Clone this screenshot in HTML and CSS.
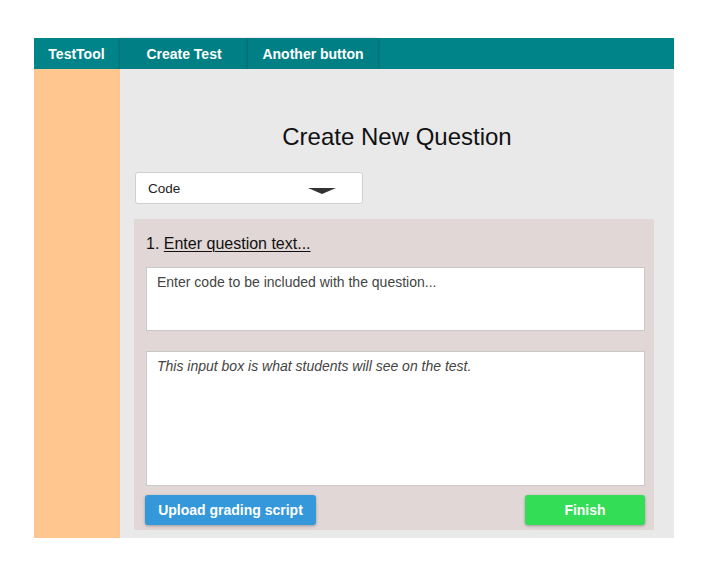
FILE: index.html
```html
<!DOCTYPE html>
<html>
<head>
<meta charset="utf-8">
<link rel="stylesheet" href="styles.css">
</head>
<body>
<div class="app">
  <nav class="nav">
    <div class="brand">TestTool</div>
    <button class="navbtn nb1">Create Test</button>
    <button class="navbtn nb2">Another button</button>
  </nav>
  <div class="body">
    <aside class="side"></aside>
    <main class="main">
      <h1 class="title">Create New Question</h1>
      <div class="select">
        <span>Code</span>
        <span class="caret"></span>
      </div>
      <section class="panel">
        <div class="qline">1. <u>Enter question text...</u></div>
        <div class="ta ta1">Enter code to be included with the question...</div>
        <div class="ta ta2"><i>This input box is what students will see on the test.</i></div>
        <div class="actions">
          <button class="btn upload">Upload grading script</button>
          <button class="btn finish">Finish</button>
        </div>
      </section>
    </main>
  </div>
</div>
</body>
</html>
```
FILE: styles.css
```css
html, body { margin: 0; padding: 0; background: #fff; }
body { font-family: "Liberation Sans", Arial, sans-serif; }
.app { margin: 38px 35px 0 34px; width: 640px; }
.nav { display: flex; height: 31px; background: #00848a; }
.brand { width: 86px; color: #fff; font-weight: bold; font-size: 14px; line-height: 31px; text-align: center; box-sizing: border-box; padding: 1px 1px 0 0; }
.navbtn { border: none; background: #007f84; color: #fff; font-family: inherit; font-weight: bold; font-size: 14px; height: 31px; box-shadow: 0 1px 3px rgba(0,0,0,0.35); padding: 0; }
.nb1 { width: 128px; }
.nb2 { width: 130px; }
.body { display: flex; height: 469px; }
.side { width: 86px; background: #ffc78f; }
.main { flex: 1; background: #e9e9e9; padding: 0 20px 8px 14px; display: flex; flex-direction: column; }
.title { margin: 54px 0 0 6px; font-weight: normal; font-size: 24px; line-height: 28px; text-align: center; color: #111; }
.select { margin-top: 21px; margin-left: 1px; width: 228px; height: 33px; background: #fff; border: 1px solid #cfcfcf; border-radius: 3px; display: flex; align-items: center; padding-left: 12px; box-sizing: border-box; position: relative; font-size: 13.5px; color: #222; }
.caret { position: absolute; left: 172px; top: 15px; width: 0; height: 0; border-left: 14px solid transparent; border-right: 14px solid transparent; border-top: 6px solid #333; }
.panel { margin-top: 15px; flex: 1; background: #e0d7d6; padding: 15px 9px 5px 12px; display: flex; flex-direction: column; }
.qline { font-size: 16px; color: #111; line-height: 19px; }
.qline u { text-decoration-thickness: 1px; text-underline-offset: 2px; }
.ta { background: #fff; border: 1px solid #c9c9c9; box-sizing: border-box; padding: 6px 10px; font-size: 14px; color: #444; line-height: 17px; }
.ta1 { margin-top: 14px; height: 64px; }
.ta2 { margin-top: 20px; height: 135px; color: #444; }
.actions { margin-top: 9px; display: flex; justify-content: space-between; }
.btn { border: none; border-radius: 3px; color: #fff; font-family: inherit; font-weight: bold; font-size: 14px; height: 30px; box-shadow: 0 1px 3px rgba(0,0,0,0.3); padding: 0; }
.upload { background: #3498db; width: 171px; margin-left: -1px; }
.finish { background: #33dd55; width: 120px; }
```
